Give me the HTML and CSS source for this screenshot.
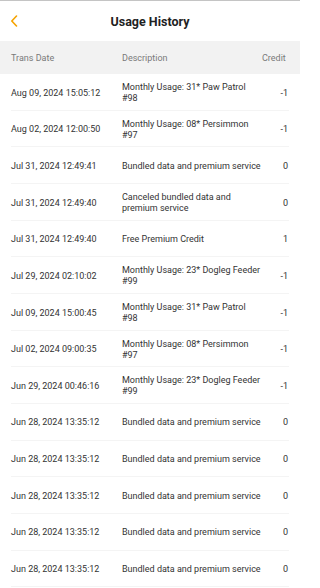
FILE: index.html
```html
<!DOCTYPE html>
<html>
<head>
<meta charset="utf-8">
<link rel="stylesheet" href="styles.css">
</head>
<body>
<div class="page">
  <header class="topbar">
    <span class="back">
      <svg width="8" height="12" viewBox="0 0 8 12"><path d="M6.5 1 L1.8 6 L6.5 11" fill="none" stroke="#f5a300" stroke-width="1.6" stroke-linecap="round" stroke-linejoin="round"/></svg>
    </span>
    <h1 class="title">Usage History</h1>
  </header>
  <div class="thead">
    <span>Trans Date</span>
    <span>Description</span>
    <span class="c-credit">Credit</span>
  </div>
  <div class="rows">
    <div class="row"><span class="date">Aug 09, 2024 15:05:12</span><span class="desc">Monthly Usage: 31* Paw Patrol #98</span><span class="credit">-1</span></div>
    <div class="row"><span class="date">Aug 02, 2024 12:00:50</span><span class="desc">Monthly Usage: 08* Persimmon #97</span><span class="credit">-1</span></div>
    <div class="row"><span class="date">Jul 31, 2024 12:49:41</span><span class="desc">Bundled data and premium service</span><span class="credit">0</span></div>
    <div class="row"><span class="date">Jul 31, 2024 12:49:40</span><span class="desc">Canceled bundled data and premium service</span><span class="credit">0</span></div>
    <div class="row"><span class="date">Jul 31, 2024 12:49:40</span><span class="desc">Free Premium Credit</span><span class="credit">1</span></div>
    <div class="row"><span class="date">Jul 29, 2024 02:10:02</span><span class="desc">Monthly Usage: 23* Dogleg Feeder #99</span><span class="credit">-1</span></div>
    <div class="row"><span class="date">Jul 09, 2024 15:00:45</span><span class="desc">Monthly Usage: 31* Paw Patrol #98</span><span class="credit">-1</span></div>
    <div class="row"><span class="date">Jul 02, 2024 09:00:35</span><span class="desc">Monthly Usage: 08* Persimmon #97</span><span class="credit">-1</span></div>
    <div class="row"><span class="date">Jun 29, 2024 00:46:16</span><span class="desc">Monthly Usage: 23* Dogleg Feeder #99</span><span class="credit">-1</span></div>
    <div class="row"><span class="date">Jun 28, 2024 13:35:12</span><span class="desc">Bundled data and premium service</span><span class="credit">0</span></div>
    <div class="row"><span class="date">Jun 28, 2024 13:35:12</span><span class="desc">Bundled data and premium service</span><span class="credit">0</span></div>
    <div class="row"><span class="date">Jun 28, 2024 13:35:12</span><span class="desc">Bundled data and premium service</span><span class="credit">0</span></div>
    <div class="row"><span class="date">Jun 28, 2024 13:35:12</span><span class="desc">Bundled data and premium service</span><span class="credit">0</span></div>
    <div class="row"><span class="date">Jun 28, 2024 13:35:12</span><span class="desc">Bundled data and premium service</span><span class="credit">0</span></div>
  </div>
</div>
</body>
</html>
```
FILE: styles.css
```css
html, body {
  margin: 0;
  padding: 0;
  background: #fff;
}
body {
  font-family: Roboto, "Noto Sans", sans-serif;
  color: #333;
  width: 300px;
  height: 588px;
  overflow: hidden;
}
.page {
  border-top: 1px solid #c4c4c4;
}
.topbar {
  height: 40px;
  display: flex;
  align-items: center;
  justify-content: center;
  position: relative;
}
.back {
  position: absolute;
  left: 10px;
  top: 14px;
  display: flex;
}
.title {
  margin: 0;
  padding-top: 1px;
  font-size: 12.5px;
  font-weight: 700;
  color: #222;
}
.thead {
  height: 33px;
  background: #f2f2f2;
  display: grid;
  grid-template-columns: 111px 140px 1fr;
  align-items: center;
  padding: 0 15px 0 11px;
  font-size: 9px;
  color: #7a7a7a;
}
.c-credit {
  text-align: right;
}
.rows {
  display: flex;
  flex-direction: column;
}
.row {
  height: 36.67px;
  box-sizing: border-box;
  display: grid;
  grid-template-columns: 111px 140px 1fr;
  align-items: center;
  margin: 0 11px 0 11px;
  padding-top: 2.5px;
  border-bottom: 1px solid #f4f4f4;
  font-size: 9px;
  color: #333;
  line-height: 11px;
}
.credit {
  text-align: right;
  padding-right: 1px;
}
```
